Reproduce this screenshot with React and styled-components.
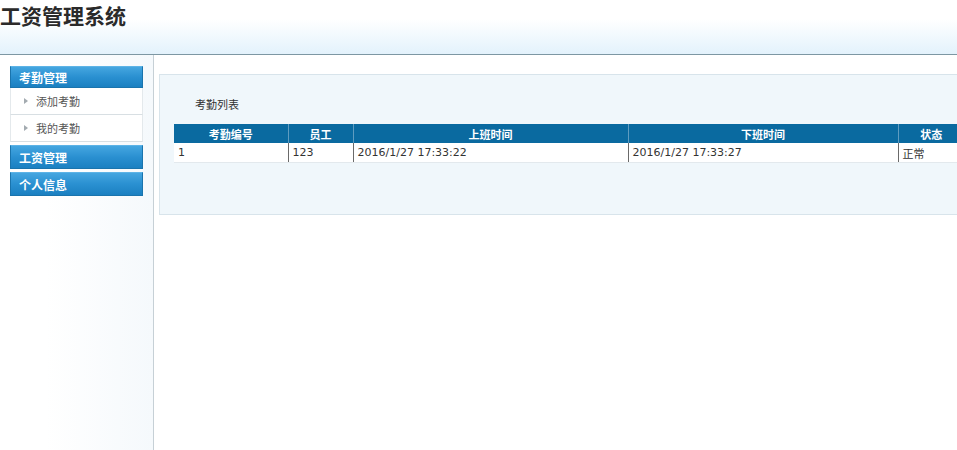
import styled, { createGlobalStyle } from "styled-components";

const Global = createGlobalStyle`
  html, body {
    margin: 0;
    padding: 0;
    background: #fff;
    overflow: hidden;
  }
  body {
    font-family: "DejaVu Sans", "Noto Sans CJK SC", sans-serif;
    font-size: 12px;
    color: #333;
  }
`;

const Page = styled.div`
  width: 100%;
  height: 450px;
  display: flex;
  flex-direction: column;
`;

const Header = styled.div`
  height: 54px;
  flex-shrink: 0;
  background: linear-gradient(to bottom, #ffffff 0%, #ffffff 35%, #e3f2fc 100%);
  border-bottom: 1px solid #7d97a3;
  box-sizing: content-box;
`;

const Logo = styled.h1`
  margin: 0;
  padding: 2px 0 0 0;
  font-family: "Noto Sans CJK SC", sans-serif;
  font-size: 21px;
  font-weight: bold;
  line-height: 26px;
  color: #2a2a2a;
`;

const Body = styled.div`
  flex: 1;
  display: flex;
  min-height: 0;
`;

const Sidebar = styled.div`
  width: 154px;
  flex-shrink: 0;
  background: linear-gradient(to right, #ffffff 0%, #ffffff 30%, #f5f9fc 100%);
  border-right: 1px solid #c6d0d6;
  padding: 11px 0 0 10px;
  box-sizing: border-box;
`;

const MenuGroup = styled.div`
  width: 133px;
  margin-bottom: 3px;
`;

const MenuHead = styled.div`
  height: ${(p) => p.$h || 22}px;
  line-height: ${(p) => p.$h || 22}px;
  padding-left: 8px;
  background: linear-gradient(to bottom, #45a6e0 0%, #2a90d1 50%, #1b80c1 100%);
  border: 1px solid #1a74ad;
  border-top-color: #5db3e6;
  color: #fff;
  font-family: "Noto Sans CJK SC", sans-serif;
  font-weight: bold;
  font-size: 12px;
  box-sizing: border-box;
`;

const MenuItem = styled.div`
  height: 27px;
  display: flex;
  align-items: center;
  padding-left: 13px;
  background: #fff;
  border-left: 1px solid #e4e9ec;
  border-right: 1px solid #e4e9ec;
  border-bottom: 1px solid #d8dfe3;
  font-family: "Noto Sans CJK SC", sans-serif;
  font-size: 11px;
  color: #555;
  box-sizing: border-box;
`;

const Arrow = styled.span`
  width: 0;
  height: 0;
  border-top: 3px solid transparent;
  border-bottom: 3px solid transparent;
  border-left: 4px solid #a3abb0;
  margin-right: 8px;
`;

const Main = styled.div`
  flex: 1;
  padding: 19px 0 0 5px;
  min-width: 0;
`;

const Panel = styled.div`
  width: 830px;
  height: 141px;
  background: #f0f7fb;
  border: 1px solid #d8e4eb;
  box-sizing: border-box;
  padding: 20px 0 0 14px;
`;

const PanelTitle = styled.div`
  font-family: "Noto Sans CJK SC", sans-serif;
  font-size: 11px;
  color: #333;
  padding-left: 21px;
  height: 29px;
  line-height: 18px;
`;

const Table = styled.table`
  border-collapse: collapse;
  table-layout: fixed;
  width: 790px;
`;

const Th = styled.th`
  height: 19px;
  padding: 0;
  background: #0a6aa0;
  color: #fff;
  font-family: "Noto Sans CJK SC", sans-serif;
  font-size: 11px;
  font-weight: bold;
  text-align: center;
  border-left: 1px solid #5f9cc0;
  &:first-child {
    border-left: none;
  }
`;

const Td = styled.td`
  height: 19px;
  padding: 0 0 0 4px;
  background: #fff;
  font-family: "DejaVu Sans", "Noto Sans CJK SC", sans-serif;
  font-size: 11px;
  color: #333;
  border-left: 1px solid #6a6a6a;
  border-bottom: 1px solid #e3e9ed;
  white-space: nowrap;
  overflow: hidden;
  &:first-child {
    border-left: none;
  }
`;

const columns = [
  { title: "考勤编号", width: 114 },
  { title: "员工", width: 65 },
  { title: "上班时间", width: 275 },
  { title: "下班时间", width: 270 },
  { title: "状态", width: 66 },
];

const rows = [["1", "123", "2016/1/27 17:33:22", "2016/1/27 17:33:27", "正常"]];

export default function App() {
  return (
    <>
      <Global />
      <Page>
        <Header>
          <Logo>工资管理系统</Logo>
        </Header>
        <Body>
          <Sidebar>
            <MenuGroup>
              <MenuHead>考勤管理</MenuHead>
              <MenuItem>
                <Arrow />
                添加考勤
              </MenuItem>
              <MenuItem>
                <Arrow />
                我的考勤
              </MenuItem>
            </MenuGroup>
            <MenuGroup>
              <MenuHead $h={24}>工资管理</MenuHead>
            </MenuGroup>
            <MenuGroup>
              <MenuHead $h={24}>个人信息</MenuHead>
            </MenuGroup>
          </Sidebar>
          <Main>
            <Panel>
              <PanelTitle>考勤列表</PanelTitle>
              <Table>
                <colgroup>
                  {columns.map((c) => (
                    <col key={c.title} style={{ width: c.width }} />
                  ))}
                </colgroup>
                <thead>
                  <tr>
                    {columns.map((c) => (
                      <Th key={c.title}>{c.title}</Th>
                    ))}
                  </tr>
                </thead>
                <tbody>
                  {rows.map((r, i) => (
                    <tr key={i}>
                      {r.map((v, j) => (
                        <Td key={j}>{v}</Td>
                      ))}
                    </tr>
                  ))}
                </tbody>
              </Table>
            </Panel>
          </Main>
        </Body>
      </Page>
    </>
  );
}
